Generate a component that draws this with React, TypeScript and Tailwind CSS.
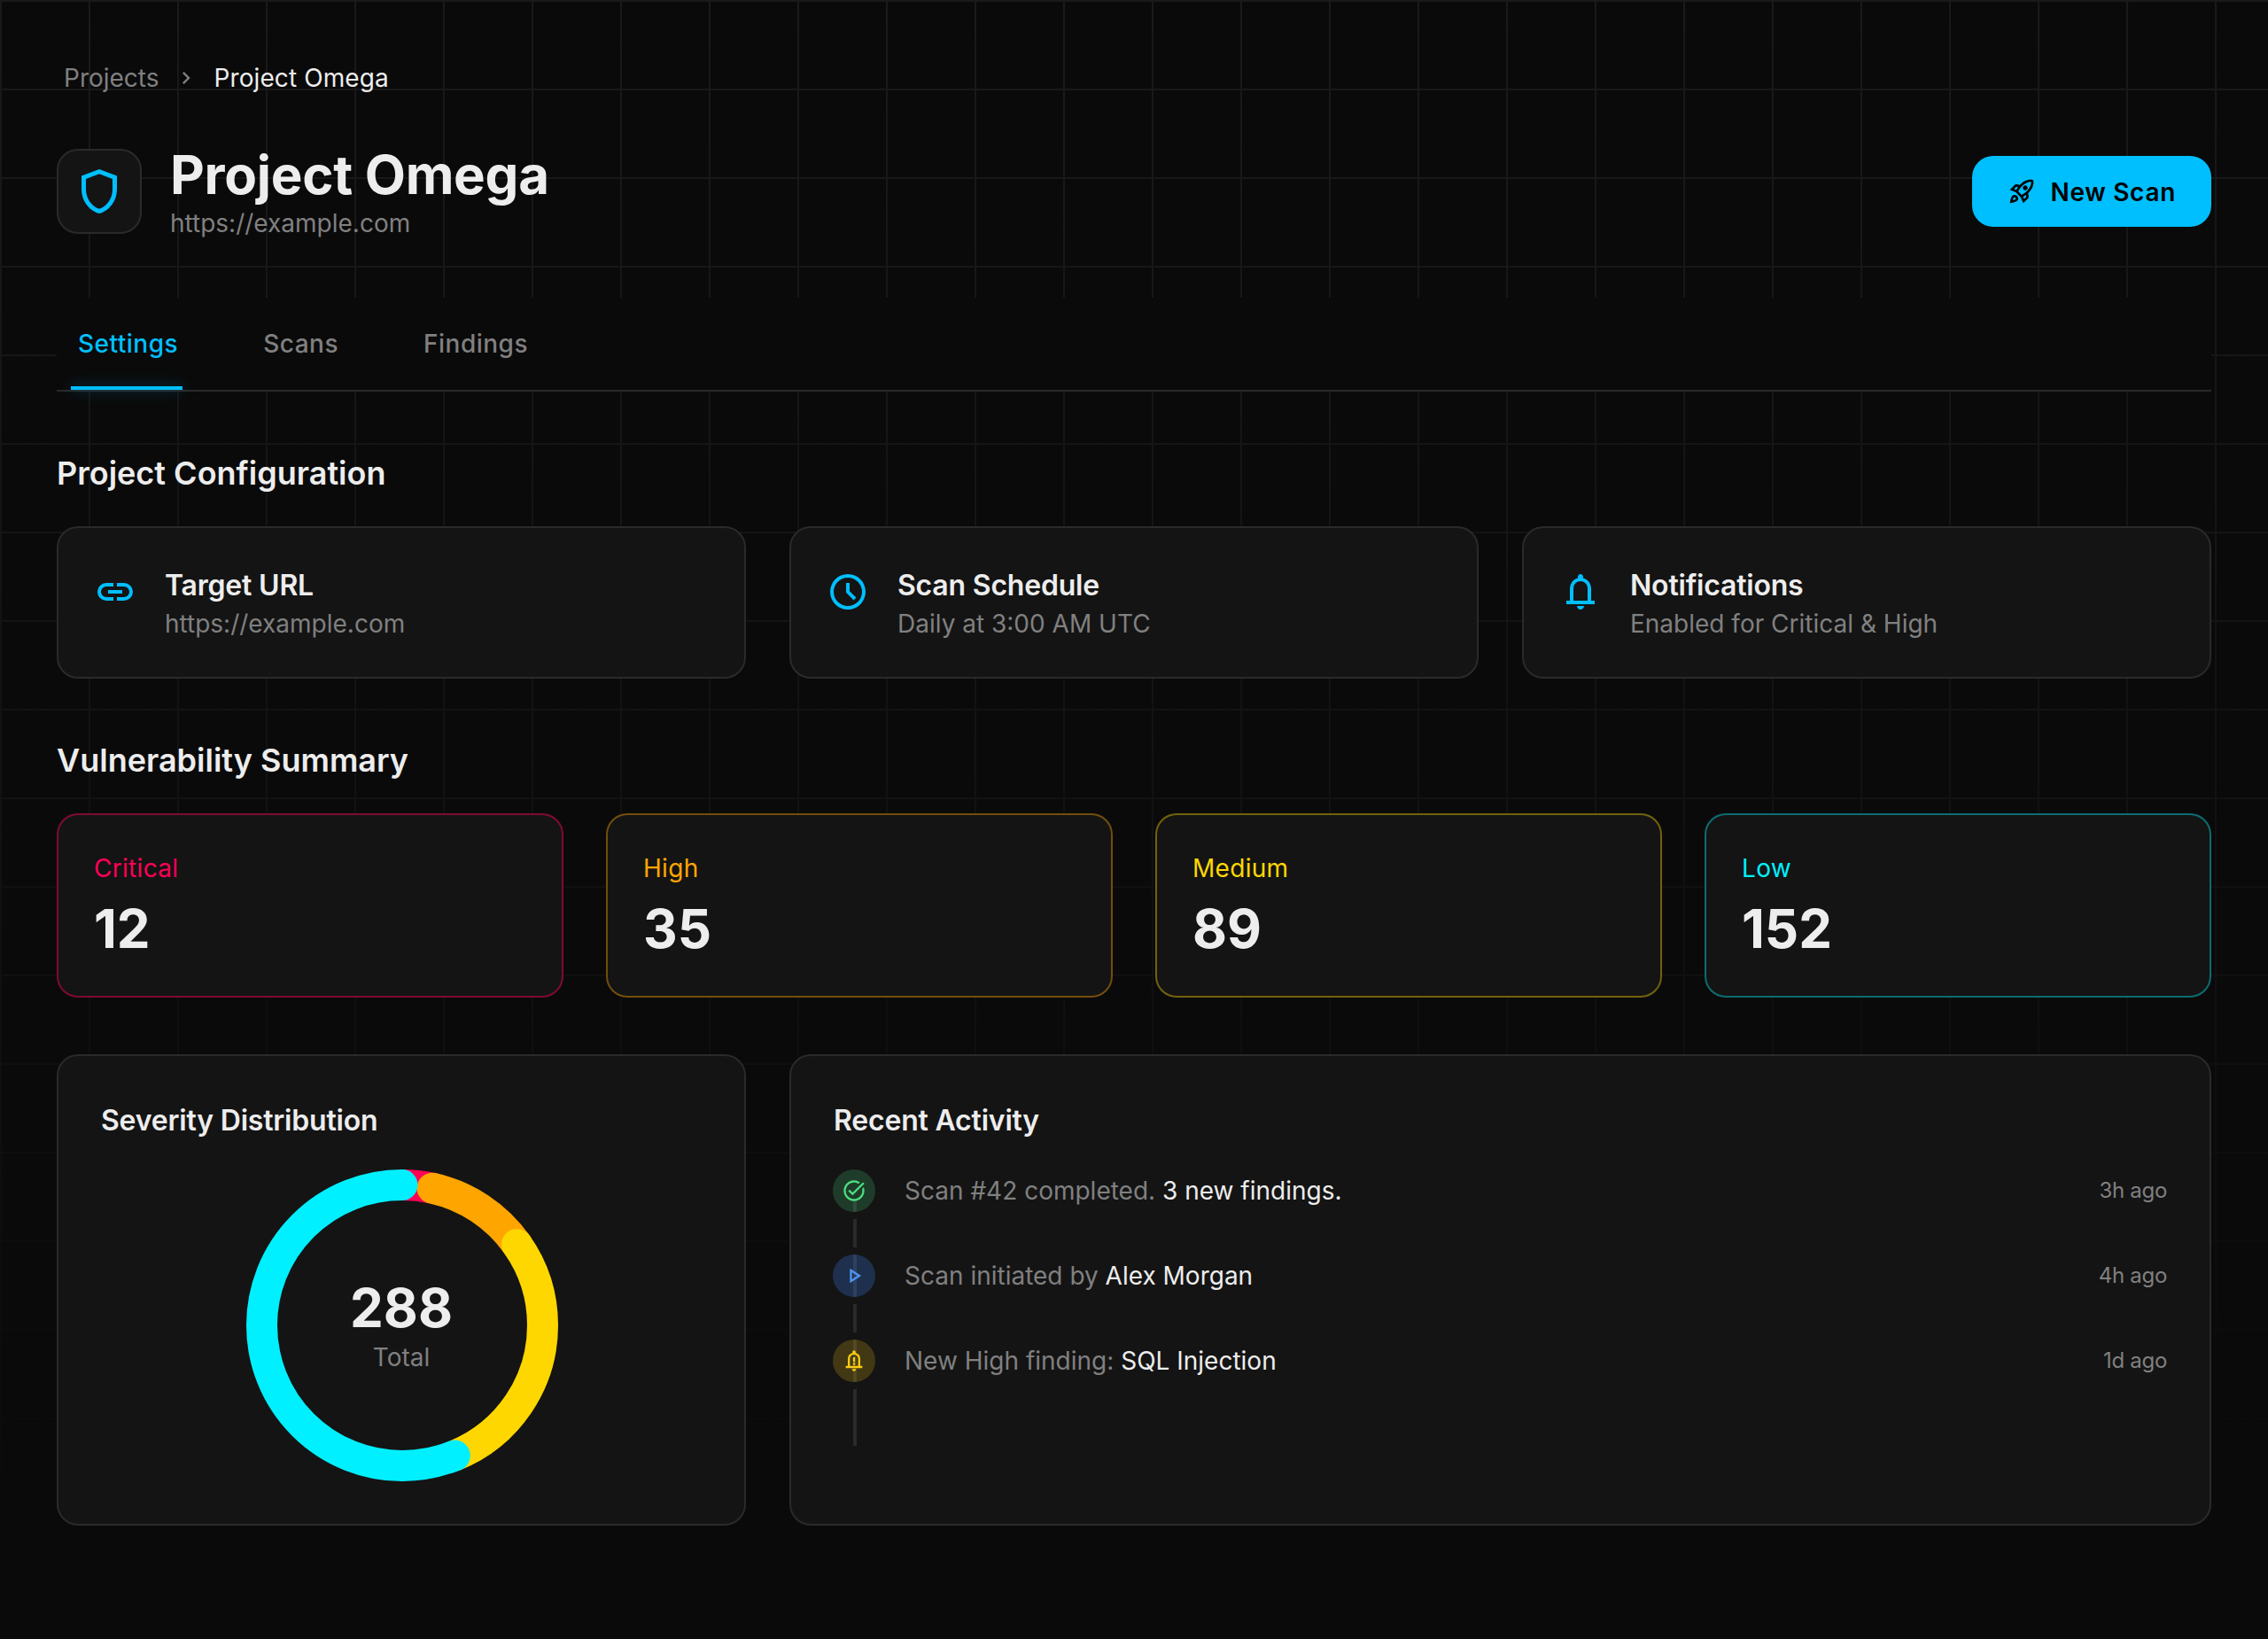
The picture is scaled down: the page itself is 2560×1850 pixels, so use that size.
import type { ReactNode } from 'react';
import { MdChevronRight, MdOutlinePlayArrow, MdOutlineRocketLaunch, MdOutlineTaskAlt } from 'react-icons/md';

const BELL_PATH =
  'M4 19v-2h2v-7q0-2.075 1.25-3.687Q8.5 4.7 10.5 4.2v-.7q0-.625.438-1.062Q11.375 2 12 2t1.063.438q.437.437.437 1.062v.7q2 .5 3.25 2.113Q18 7.925 18 10v7h2v2Zm8 3q-.825 0-1.412-.587Q10 20.825 10 20h4q0 .825-.588 1.413Q12.825 22 12 22Zm-4-5h8v-7q0-1.65-1.175-2.825Q13.65 6 12 6q-1.65 0-2.825 1.175Q8 8.35 8 10Z';

function Glyph({ size, children }: { size: number; children: ReactNode }) {
  return (
    <svg width={size} height={size} viewBox="0 0 24 24" fill="currentColor" className="block">
      {children}
    </svg>
  );
}

const ShieldIcon = () => (
  <Glyph size={60}>
    <path d="M12 22q-3.475-.875-5.738-3.988Q4 14.9 4 11.1V5l8-3 8 3v6.1q0 3.8-2.262 6.912Q15.475 21.125 12 22Zm0-2.1q2.6-.825 4.3-3.3 1.7-2.475 1.7-5.5V6.375l-6-2.25-6 2.25V11.1q0 3.025 1.7 5.5t4.3 3.3Z" />
  </Glyph>
);

const LinkIcon = () => (
  <Glyph size={48}>
    <path d="M11 17H7q-2.075 0-3.537-1.463Q2 14.075 2 12t1.463-3.537Q4.925 7 7 7h4v2H7q-1.25 0-2.125.875T4 12q0 1.25.875 2.125T7 15h4Zm-3-4v-2h8v2Zm5 4v-2h4q1.25 0 2.125-.875T20 12q0-1.25-.875-2.125T17 9h-4V7h4q2.075 0 3.538 1.463Q22 9.925 22 12t-1.462 3.537Q19.075 17 17 17Z" />
  </Glyph>
);

const ClockIcon = () => (
  <Glyph size={48}>
    <path d="m15.3 16.7 1.4-1.4-3.7-3.7V7h-2v5.4ZM12 22q-2.075 0-3.9-.788-1.825-.787-3.175-2.137-1.35-1.35-2.137-3.175Q2 14.075 2 12t.788-3.9q.787-1.825 2.137-3.175 1.35-1.35 3.175-2.138Q9.925 2 12 2t3.9.787q1.825.788 3.175 2.138 1.35 1.35 2.137 3.175Q22 9.925 22 12t-.788 3.9q-.787 1.825-2.137 3.175-1.35 1.35-3.175 2.137Q14.075 22 12 22Zm0-2q3.325 0 5.663-2.337Q20 15.325 20 12t-2.337-5.663Q15.325 4 12 4T6.337 6.337Q4 8.675 4 12t2.337 5.663Q8.675 20 12 20Z" />
  </Glyph>
);

const BellIcon = () => (
  <Glyph size={48}>
    <path d={BELL_PATH} />
  </Glyph>
);

const BellAlertIcon = () => (
  <Glyph size={28}>
    <path d={BELL_PATH} />
    <path d="M11 13h2V8.5h-2Zm0 3h2v-2h-2Z" />
  </Glyph>
);

const CONFIG: { icon: ReactNode; title: string; value: string }[] = [
  { icon: <LinkIcon />, title: 'Target URL', value: 'https://example.com' },
  { icon: <ClockIcon />, title: 'Scan Schedule', value: 'Daily at 3:00 AM UTC' },
  { icon: <BellIcon />, title: 'Notifications', value: 'Enabled for Critical & High' },
];

const SUMMARY = [
  { label: 'Critical', count: 12, border: 'border-[#ff0055]/45', text: 'text-[#ff0055]' },
  { label: 'High', count: 35, border: 'border-[#ffa500]/40', text: 'text-[#ffa500]' },
  { label: 'Medium', count: 89, border: 'border-[#ffd700]/40', text: 'text-[#ffd700]' },
  { label: 'Low', count: 152, border: 'border-[#00f0ff]/40', text: 'text-[#00f0ff]' },
];

// start / length in degrees, clockwise from 12 o'clock, painted in this order
const SEGMENTS = [
  { color: '#ff0055', start: 0, length: 12.4 },
  { color: '#ffa500', start: 12.4, length: 42.4 },
  { color: '#ffd700', start: 54.8, length: 103.2 },
  { color: '#00f0ff', start: 158, length: 202 },
];

const ACTIVITY = [
  {
    icon: <MdOutlineTaskAlt size={28} />,
    dot: 'bg-[#4ade80]/20 text-[#4ade80]',
    lead: 'Scan #42 completed.',
    strong: '3 new findings.',
    time: '3h ago',
  },
  {
    icon: <MdOutlinePlayArrow size={28} />,
    dot: 'bg-[#3b82f6]/25 text-[#4f94f5]',
    lead: 'Scan initiated by',
    strong: 'Alex Morgan',
    time: '4h ago',
  },
  {
    icon: <BellAlertIcon />,
    dot: 'bg-[#facc15]/20 text-[#facc15]',
    lead: 'New High finding:',
    strong: 'SQL Injection',
    time: '1d ago',
  },
];

function Donut() {
  return (
    <div className="relative w-[352px] h-[352px] mx-auto">
      <svg viewBox="0 0 352 352" className="w-full h-full overflow-visible">
        {SEGMENTS.map((s) => (
          <circle
            key={s.color}
            cx="177"
            cy="176"
            r="158.5"
            fill="none"
            stroke={s.color}
            strokeWidth="35"
            strokeLinecap="round"
            pathLength={360}
            strokeDasharray={`${s.length} 360`}
            strokeDashoffset={-s.start}
            transform="rotate(-90 177 176)"
          />
        ))}
      </svg>
      <div className="absolute inset-0 flex flex-col items-center justify-center">
        <span className="text-[60px] leading-[72px] font-bold text-[#ededed]">288</span>
        <span className="text-[28px] leading-10 text-[#808080]">Total</span>
      </div>
    </div>
  );
}

export default function App() {
  return (
    <div className="min-h-[1850px] bg-[#0a0a0a] bg-[linear-gradient(to_bottom,transparent,#0a0a0a_96%),linear-gradient(#1a1a1a_2px,transparent_2px),linear-gradient(90deg,#1a1a1a_2px,transparent_2px)] bg-[size:100%_100%,100px_100px,100px_100px] font-['Inter',sans-serif] text-[#ededed]">
      <div className="px-16 pt-[68px]">
        <nav className="flex items-center gap-4 h-10 pl-2 text-[28px]">
          <span className="text-[#808080]">Projects</span>
          <MdChevronRight size={28} className="text-[#808080]" />
          <span className="ml-0.5 tracking-[0.1px] text-[#ededed]">Project Omega</span>
        </nav>

        <header className="flex items-start justify-between mt-[60px]">
          <div className="flex items-start gap-8">
            <div className="w-24 h-24 rounded-3xl bg-[#141414] border-2 border-[#2a2a2a] flex items-center justify-center text-[#00bfff]">
              <ShieldIcon />
            </div>
            <div className="-mt-px">
              <h1 className="text-[60px] leading-[60px] font-bold tracking-[-0.3px]">Project Omega</h1>
              <p className="mt-[5px] text-[28px] leading-10 text-[#808080]">https://example.com</p>
            </div>
          </div>
          <button className="flex items-center gap-4 h-20 mt-2 px-10 rounded-3xl bg-[#00bfff] text-black text-[28px] font-semibold tracking-wide">
            <MdOutlineRocketLaunch size={32} />
            <span className="mt-0.5">New Scan</span>
          </button>
        </header>

        <div className="mt-16 pt-8 bg-[#0a0a0a]">
          <div className="flex gap-20 px-4 border-b-2 border-[#2a2a2a] h-[74px]">
            <button className="relative h-[72px] px-2 pb-8 text-[28px] leading-10 font-medium tracking-[0.5px] text-[#00bfff]">
              Settings
              <span className="absolute left-0 right-[3px] bottom-0 h-1 bg-[#00bfff] shadow-[0_0_16px_rgba(0,191,255,0.4)]" />
            </button>
            <button className="h-[72px] px-2 pb-8 text-[28px] leading-10 font-medium tracking-[0.5px] text-[#808080]">Scans</button>
            <button className="h-[72px] px-2 pb-8 text-[28px] leading-10 font-medium tracking-[0.5px] text-[#808080]">Findings</button>
          </div>
        </div>

        <section className="mt-16">
          <h2 className="text-[36px] leading-[56px] font-semibold">Project Configuration</h2>
          <div className="grid grid-cols-3 gap-[49px] mt-8">
            {CONFIG.map((c) => (
              <div key={c.title} className="flex gap-8 p-10 rounded-3xl bg-[#141414] border-2 border-[#2a2a2a]">
                <div className="mt-2 h-12 text-[#00bfff]">{c.icon}</div>
                <div>
                  <p className="text-[32px] leading-[50px] font-semibold tracking-[-0.2px]">{c.title}</p>
                  <p className="-mt-0.5 text-[28px] leading-10 text-[#808080]">{c.value}</p>
                </div>
              </div>
            ))}
          </div>
        </section>

        <section className="mt-16">
          <h2 className="text-[36px] leading-[56px] font-semibold">Vulnerability Summary</h2>
          <div className="grid grid-cols-4 gap-12 mt-8">
            {SUMMARY.map((s) => (
              <div key={s.label} className={`p-10 rounded-3xl bg-[#141414] border-2 ${s.border}`}>
                <p className={`text-[28px] leading-10 tracking-[0.3px] ${s.text}`}>{s.label}</p>
                <p className="mt-3 text-[60px] leading-[72px] font-bold">{s.count}</p>
              </div>
            ))}
          </div>
        </section>

        <div className="grid grid-cols-3 gap-[49px] mt-16">
          <div className="p-12 rounded-3xl bg-[#141414] border-2 border-[#2a2a2a]">
            <h3 className="text-[32px] leading-[50px] font-semibold tracking-[-0.2px]">Severity Distribution</h3>
            <div className="mt-[30px]">
              <Donut />
            </div>
          </div>

          <div className="col-span-2 p-12 rounded-3xl bg-[#141414] border-2 border-[#2a2a2a]">
            <h3 className="text-[32px] leading-[50px] font-semibold tracking-[-0.2px]">Recent Activity</h3>
            <div className="relative mt-[30px]">
              <div className="absolute left-[22px] top-[35px] w-1 h-[277px] bg-[#2a2a2a]" />
              <div className="flex flex-col gap-12">
                {ACTIVITY.map((a) => (
                  <div key={a.time} className="relative flex items-center gap-[33px] h-12">
                    <div className={`-ml-px w-12 h-12 rounded-full shrink-0 ring-8 ring-[#141414] flex items-center justify-center ${a.dot}`}>
                      {a.icon}
                    </div>
                    <p className="flex-1 text-[28px] text-[#808080]">
                      {a.lead} <span className="text-[#ededed]">{a.strong}</span>
                    </p>
                    <span className="text-2xl tracking-[-0.3px] text-[#808080]">{a.time}</span>
                  </div>
                ))}
              </div>
            </div>
          </div>
        </div>
      </div>
    </div>
  );
}
